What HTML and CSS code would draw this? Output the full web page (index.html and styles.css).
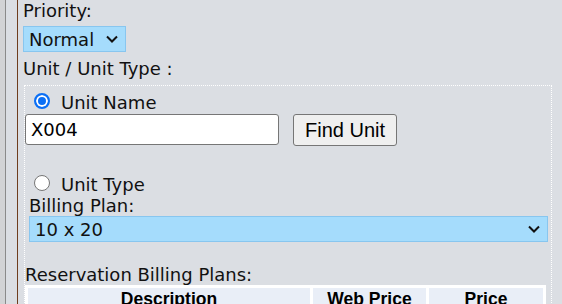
FILE: index.html
```html
<!DOCTYPE html>
<html lang="en">
<head>
    <meta charset="UTF-8">
    <meta name="viewport" content="width=device-width, initial-scale=1.0">
    <title>Reservation - Unit</title>
    <link rel="stylesheet" href="styles.css">
</head>
<body>
    <div class="rail"></div>
    <div class="panel">
        <div class="label">Priority:</div>
        <div class="select-wrap priority">
            <select class="select" id="priority">
                <option>Normal</option>
                <option>High</option>
                <option>Low</option>
            </select>
            <svg class="chevron" width="12" height="8" viewBox="0 0 12 8"><path d="M1 1.5 L6 6.5 L11 1.5" fill="none" stroke="#111" stroke-width="2"/></svg>
        </div>

        <div class="label unit-label">Unit / Unit Type :</div>
        <fieldset class="unit-box">
            <label class="radio-row">
                <input type="radio" name="unit-mode" checked>
                <span>Unit Name</span>
            </label>
            <div class="find-row">
                <input type="text" class="unit-input" value="X004">
                <button type="button" class="find-btn">Find Unit</button>
            </div>

            <label class="radio-row type-row">
                <input type="radio" name="unit-mode">
                <span>Unit Type</span>
            </label>
            <div class="plan">
                <div class="label">Billing Plan:</div>
                <div class="select-wrap plan-select">
                    <select class="select" id="billing-plan">
                        <option>10 x 20</option>
                        <option>10 x 10</option>
                        <option>5 x 10</option>
                    </select>
                    <svg class="chevron" width="12" height="8" viewBox="0 0 12 8"><path d="M1 1.5 L6 6.5 L11 1.5" fill="none" stroke="#111" stroke-width="2"/></svg>
                </div>
            </div>

            <div class="label res-label">Reservation Billing Plans:</div>
            <table class="plans">
                <thead>
                    <tr>
                        <th class="col-desc">Description</th>
                        <th class="col-web">Web Price</th>
                        <th class="col-price">Price</th>
                    </tr>
                </thead>
                <tbody>
                    <tr>
                        <td>10 x 20 Standard</td>
                        <td>$120.00</td>
                        <td>$135.00</td>
                    </tr>
                </tbody>
            </table>
        </fieldset>
    </div>
</body>
</html>
```

FILE: styles.css
```css
/* Page frame */
body {
    margin: 0;
    display: flex;
    min-height: 304px;
    background-color: #dbdee3;
    color: #111;
    font-family: "DejaVu Sans", Verdana, sans-serif;
    font-size: 18px;
    line-height: 21px;
}

.rail {
    width: 5px;
    background-color: #d2d3d5;
    border-right: 1px solid #8a8a8a;
}

.panel {
    flex: 1;
    margin-left: 11px;
    border-left: 1px solid #6e3d1e; /* brown divider */
    padding-left: 5px;
}

.label {
    height: 21px;
}

.unit-label {
    margin-top: 6px;
}

/* Blue selects */
.select-wrap {
    position: relative;
    display: flex;
}

.priority {
    width: 103px;
    margin-top: 5px;
}

.select {
    appearance: none;
    -webkit-appearance: none;
    width: 100%;
    height: 26px;
    margin: 0;
    padding: 0 0 0 5px;
    border: 1px solid #88c6ef;
    border-radius: 0;
    background-color: #a5dcfc;
    color: #111;
    font-family: inherit;
    font-size: 18px;
}

.chevron {
    position: absolute;
    right: 8px;
    top: 9px;
    pointer-events: none;
}

/* Dotted unit box */
.unit-box {
    margin: 6px 10px 0 1px;
    padding: 6px 0 0 0;
    border: 1px dotted #fff;
    min-width: 0;
}

.radio-row {
    display: flex;
    align-items: flex-start;
    height: 21px;
}

.radio-row input {
    appearance: none;
    -webkit-appearance: none;
    width: 16px;
    height: 16px;
    margin: 1px 11px 0 9px;
    border: 1px solid #767676;
    border-radius: 50%;
    background-color: #fff;
    box-sizing: border-box;
}

.radio-row input:checked {
    border: 2px solid #0b6ff5;
    background-color: #0b6ff5;
    box-shadow: inset 0 0 0 2px #fff;
}

.find-row {
    display: flex;
    margin-top: 1px;
}

.unit-input {
    width: 254px;
    height: 31px;
    margin: 0;
    padding: 0 5px;
    border: 1px solid #767676;
    border-radius: 3px;
    box-sizing: border-box;
    background-color: #fff;
    color: #000;
    font-family: inherit;
    font-size: 18px;
}

.find-btn {
    width: 104px;
    height: 32px;
    margin: 0 0 0 14px;
    padding: 0;
    border: 1px solid #767676;
    border-radius: 3px;
    background-color: #efefef;
    color: #000;
    font-family: "Liberation Sans", Arial, sans-serif;
    font-size: 20px;
}

.type-row {
    margin-top: 28px;
}

.plan {
    padding: 0 3px 0 4px;
}

.res-label {
    margin-top: 22px;
}

/* Billing plan table */
.plans {
    width: 521px;
    border-spacing: 3px;
    background-color: #fff;
    font-family: "Liberation Sans", Arial, sans-serif;
}

.plans th,
.plans td {
    padding: 1px;
    background-color: #e9eef7;
    text-align: center;
}

.plans th {
    font-size: 17.5px;
    font-weight: bold;
    color: #000;
}

.col-desc {
    width: 280px;
}

.col-web {
    width: 111px;
}

.col-price {
    width: 112px;
}
```
